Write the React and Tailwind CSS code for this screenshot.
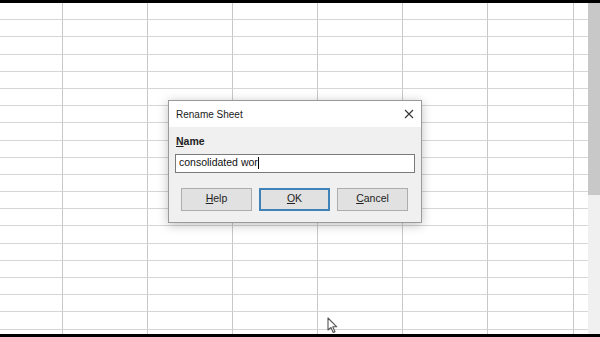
import React from "react";

const rows = Array.from({ length: 20 });
const cols = [62.5, 85.2, 85.2, 85.2, 85.2, 85.2, 85.2, 15];

function Cell({ w, last }) {
  return (
    <div
      className={`h-full shrink-0 border-b border-[#d6d6d6] ${
        last ? "" : "border-r border-r-[#c9c9c9]"
      }`}
      style={{ width: w }}
    />
  );
}

function Pointer() {
  return (
    <svg width="12" height="17" viewBox="0 0 12 17" className="absolute left-[327px] top-[317px]">
      <path
        d="M1 1 L1 13 L4 10.5 L6.2 15.5 L8 14.7 L5.8 9.8 L9.8 9.8 Z"
        fill="#ffffff"
        stroke="#555555"
        strokeWidth="1.1"
        strokeLinejoin="round"
      />
    </svg>
  );
}

function DialogButton({ label, rest, primary }) {
  return (
    <button
      className={`h-[23px] w-[71px] bg-[#e1e1e1] text-[10.5px] text-[#222] border ${
        primary ? "border-[#3f82b8] border-2" : "border-[#adadad]"
      } flex items-center justify-center`}
    >
      <span className="underline">{label}</span>
      <span>{rest}</span>
    </button>
  );
}

export default function App() {
  return (
    <div
      className="w-[600px] h-[337px] bg-white flex flex-col overflow-hidden relative"
      style={{ fontFamily: '"Liberation Sans", Arial, sans-serif' }}
    >
      <div className="h-[3px] bg-black shrink-0" />

      <div className="flex-1 flex min-h-0">
        {/* sheet grid */}
        <div className="w-[588px] flex flex-col overflow-hidden">
          {rows.map((_, i) => (
            <div key={i} className="flex h-[17.2px] shrink-0">
              {cols.map((w, j) => (
                <Cell key={j} w={w} last={j === cols.length - 1} />
              ))}
            </div>
          ))}
        </div>

        {/* scrollbar */}
        <div className="w-[12px] flex flex-col bg-[#f0f0f0]">
          <div className="h-[192px] bg-[#c8c8c8]" />
        </div>
      </div>

      <div className="h-[3px] bg-black shrink-0" />

      {/* Rename Sheet dialog */}
      <div className="absolute left-[168px] top-[100px] w-[254px] h-[123px] border border-[#9a9a9a] bg-[#f0f0f0] shadow-[0_2px_10px_rgba(0,0,0,0.25)] flex flex-col">
        <div className="h-[26px] bg-white flex items-center justify-between pl-[7px] pr-[7px]">
          <span className="text-[10px] text-[#222]">Rename Sheet</span>
          <svg width="10" height="10" viewBox="0 0 10 10">
            <path d="M1 1 L9 9 M9 1 L1 9" stroke="#333" strokeWidth="1.1" />
          </svg>
        </div>
        <div className="flex flex-col px-[6px] pt-[7px]">
          <div className="text-[10.5px] font-bold text-[#222] pl-[1px]">
            <span className="underline">N</span>ame
          </div>
          <div className="mt-[4px] h-[19px] bg-white border border-[#7a7a7a] flex items-center pl-[3px] text-[10.5px] text-[#111]">
            consolidated wor
            <span className="inline-block w-[1px] h-[12px] bg-black" />
          </div>
          <div className="mt-[15px] flex gap-[7px] pl-[6px]">
            <DialogButton label="H" rest="elp" />
            <DialogButton label="O" rest="K" primary />
            <DialogButton label="C" rest="ancel" />
          </div>
        </div>
      </div>

      <Pointer />
    </div>
  );
}
